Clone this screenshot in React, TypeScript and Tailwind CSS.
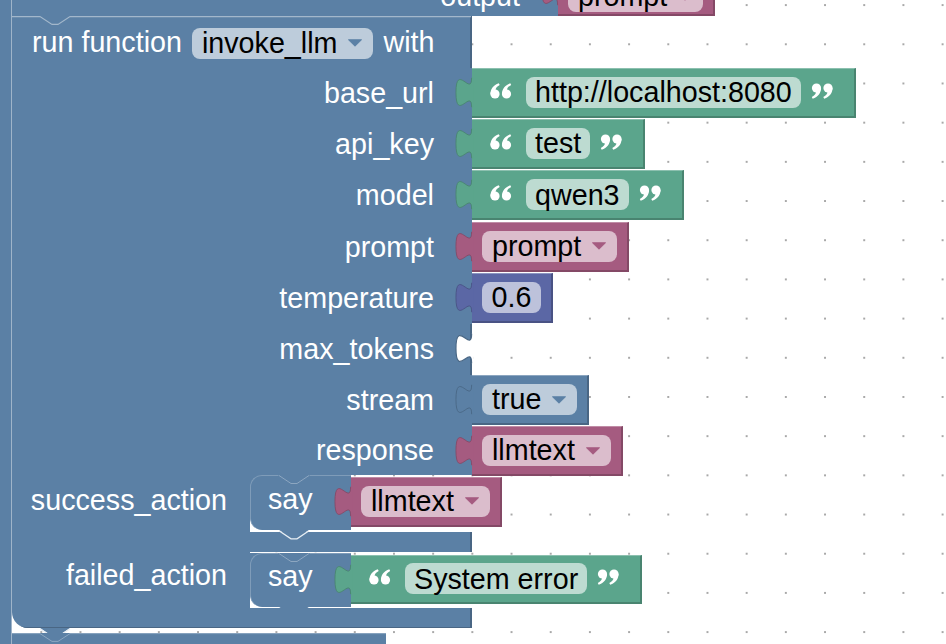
import React from 'react';

type V = 'green' | 'mag' | 'blue' | 'num';

const VARS: Record<V, { block: string; pill: string; fill: string; dark: string }> = {
  green: {
    block: 'bg-[#5ba58c] border-t-[#8cc0af] border-r-[#498470] border-b-[#498470]',
    pill: 'bg-[#bddbd1]',
    fill: '#5ba58c',
    dark: '#498470',
  },
  mag: {
    block: 'bg-[#a55b80] border-t-[#c08ca6] border-r-[#844966] border-b-[#844966]',
    pill: 'bg-[#dbbdcc]',
    fill: '#a55b80',
    dark: '#844966',
  },
  blue: {
    block: 'bg-[#5b80a5] border-t-[#8ca6c0] border-r-[#496684] border-b-[#496684]',
    pill: 'bg-[#bdccdb]',
    fill: '#5b80a5',
    dark: '#496684',
  },
  num: {
    block: 'bg-[#5b67a5] border-t-[#8c95c0] border-r-[#495284] border-b-[#495284]',
    pill: 'bg-[#bdc2db]',
    fill: '#5b67a5',
    dark: '#495284',
  },
};

function Tab({ fill, stroke }: { fill: string; stroke: string }) {
  return (
    <svg
      className="absolute left-[-17.64px] top-[-1px]"
      width="19.6"
      height="49"
      viewBox="-9 0 10 25"
      aria-hidden="true"
    >
      <path d="M1,5 L0,5 c0,10 -8,-8 -8,7.5 s8,-2.5 8,7.5 L1,20 Z" fill={fill} />
      <path d="M0,5 c0,10 -8,-8 -8,7.5 s8,-2.5 8,7.5" fill="none" stroke={stroke} strokeWidth="0.45" />
    </svg>
  );
}

function Arrow({ color }: { color: string }) {
  return (
    <svg width="16" height="8" viewBox="0 0 16 8" aria-hidden="true">
      <path d="M1.5,0.8 L14.5,0.8 L8,7.2 Z" fill={color} stroke={color} strokeWidth="1" strokeLinejoin="round" />
    </svg>
  );
}

function Pill({ v, text, dropdown }: { v: V; text: string; dropdown?: boolean }) {
  return (
    <div
      className={`h-[31px] shrink-0 rounded-[8px] flex items-center ${VARS[v].pill} ${
        dropdown ? 'pl-[10px] pr-[10px] gap-[10px]' : 'px-[9px]'
      }`}
    >
      <span className="text-black leading-none whitespace-nowrap">{text}</span>
      {dropdown && <Arrow color={VARS[v].fill} />}
    </div>
  );
}

function QuoteMark() {
  return (
    <>
      <circle cx="5" cy="11" r="4.6" />
      <path d="M0.5,11.6 C0.2,6.2 3.4,2.2 8.8,0.3 L9.7,1.9 C6.8,3.4 5.4,5.4 5.6,7.2 Z" />
    </>
  );
}

function Quote({ close, className = '' }: { close?: boolean; className?: string }) {
  return (
    <svg
      className={`relative top-[-2px] shrink-0 ${className}`}
      width="22"
      height="16"
      viewBox="0 0 22 16"
      fill="#ffffff"
      aria-hidden="true"
    >
      <g transform={close ? 'rotate(180 11 8)' : undefined}>
        <QuoteMark />
        <g transform="translate(11.5 0)">
          <QuoteMark />
        </g>
      </g>
    </svg>
  );
}

function ValueBlock({
  v,
  children,
  className = '',
  hClass = 'h-[50px]',
}: {
  v: V;
  children: React.ReactNode;
  className?: string;
  hClass?: string;
}) {
  return (
    <div className={`relative shrink-0 flex items-center border-t border-r-2 border-b-2 ${hClass} ${VARS[v].block} ${className}`}>
      <Tab fill={VARS[v].fill} stroke={VARS[v].dark} />
      {children}
    </div>
  );
}

function TextBlock({ text, hClass, className = '' }: { text: string; hClass?: string; className?: string }) {
  return (
    <ValueBlock v="green" hClass={hClass} className={`pl-[18px] pr-[21px] ${className}`}>
      <Quote />
      <div className="ml-[14px]">
        <Pill v="green" text={text} />
      </div>
      <Quote close className="ml-[10px]" />
    </ValueBlock>
  );
}

function VarBlock({ v, text, className = '' }: { v: V; text: string; className?: string }) {
  return (
    <ValueBlock v={v} className={`pl-[10px] pr-[10px] ${className}`}>
      <Pill v={v} text={text} dropdown />
    </ValueBlock>
  );
}

function NumBlock({ text }: { text: string }) {
  return (
    <ValueBlock v="num" className="pl-[10px] pr-[10px]">
      <div className="h-[31px] rounded-[8px] flex items-center px-[9.5px] bg-[#bdc2db]">
        <span className="text-black leading-none">{text}</span>
      </div>
    </ValueBlock>
  );
}

function InputRow({
  label,
  children,
  empty,
  hClass = 'h-[51.2px]',
}: {
  label: string;
  children?: React.ReactNode;
  empty?: boolean;
  hClass?: string;
}) {
  return (
    <div className={`flex items-start ${hClass}`}>
      <div
        className={`relative w-[460px] h-full shrink-0 bg-[#5b80a5] flex items-center justify-end pr-[38px] text-white ${
          empty ? 'shadow-[inset_-2px_0_0_#496684]' : ''
        }`}
      >
        <span className="whitespace-nowrap">{label}</span>
        {empty && (
          <svg
            className="absolute right-[-1.96px] top-0"
            width="19.6"
            height="49"
            viewBox="-9 0 10 25"
            aria-hidden="true"
          >
            <path d="M1,5 L0,5 c0,10 -8,-8 -8,7.5 s8,-2.5 8,7.5 L1,20 Z" fill="#ffffff" />
            <path d="M0,5 c0,10 -8,-8 -8,7.5 s8,-2.5 8,7.5" fill="none" stroke="#496684" strokeWidth="0.6" />
          </svg>
        )}
      </div>
      {children}
    </div>
  );
}

function BottomTab({ className }: { className: string }) {
  return (
    <svg className={className} width="31" height="10" viewBox="0 0 31 10" aria-hidden="true">
      <path d="M0,0 L12,8 L18,8 L30,0 Z" fill="#5b80a5" />
      <path d="M0,0.8 L12,8.8 L18,8.8 L30,0.8" stroke="#e8eef4" strokeWidth="1.3" fill="none" />
    </svg>
  );
}

function Say({ hClass, mtClass }: { hClass: string; mtClass: string }) {
  return (
    <div
      className={`relative shrink-0 w-[101px] ${hClass} ${mtClass} bg-[linear-gradient(to_bottom,#5b80a5_50%,transparent_50%)]`}
    >
      <div className="h-full w-full bg-[#5b80a5] rounded-l-[12px] border-l border-t border-[#7f9cb9] flex items-center pl-[17px] pb-[7px] text-white">
        say
      </div>
      <svg className="absolute left-0 top-0" width="101" height="10" viewBox="0 0 101 10" aria-hidden="true">
        <rect x="28.5" y="0" width="31" height="2" fill="#5b80a5" />
        <path d="M29,0.5 L41,8.5 L47,8.5 L59,0.5" stroke="#8ca6c0" strokeWidth="1" fill="none" />
      </svg>
      <BottomTab className="absolute left-[29px] top-full" />
    </div>
  );
}

export default function App() {
  return (
    <div className="relative w-[946px] h-[644px] overflow-hidden bg-white bg-[radial-gradient(circle,#a8a8a8_1px,transparent_1.5px)] bg-size-[39.2px_39.2px] bg-position-[-17.5px_-14.5px] flex text-[28.7px] font-['Liberation_Sans',Arial,sans-serif]">
      {/* outer C-block arm */}
      <div className="w-[12px] h-full shrink-0 bg-[#5b80a5] border-r border-[#9fb4c9]" />

      <div className="flex flex-col items-start">
        {/* previous block (partially visible) */}
        <div className="flex items-start h-[50px] mt-[-34px]">
          <div className="w-[546px] h-full shrink-0 bg-[#5b80a5] flex items-center justify-end pr-[38px] pt-[12px] text-white">
            output
          </div>
          <VarBlock v="mag" text="prompt" className="pt-[12px]" />
        </div>

        {/* run function block */}
        <div className="relative flex flex-col">
          <div className="h-[52px] w-[460px] bg-[#5b80a5] shadow-[inset_-2px_0_0_#496684] flex items-center pl-[20px] pt-[2px] text-white">
            <span className="whitespace-nowrap">run function</span>
            <div className="ml-[10px]">
              <Pill v="blue" text="invoke_llm" dropdown />
            </div>
            <span className="ml-[10px]">with</span>
          </div>

          <InputRow label="base_url">
            <TextBlock text="http://localhost:8080" />
          </InputRow>
          <InputRow label="api_key">
            <TextBlock text="test" />
          </InputRow>
          <InputRow label="model">
            <TextBlock text="qwen3" />
          </InputRow>
          <InputRow label="prompt">
            <VarBlock v="mag" text="prompt" />
          </InputRow>
          <InputRow label="temperature">
            <NumBlock text="0.6" />
          </InputRow>
          <InputRow label="max_tokens" empty />
          <InputRow label="stream">
            <VarBlock v="blue" text="true" />
          </InputRow>
          <InputRow label="response" hClass="h-[48.6px]">
            <VarBlock v="mag" text="llmtext" />
          </InputRow>

          {/* success_action statement input */}
          <div className="flex items-start h-[57px]">
            <div className="w-[238px] h-full shrink-0 bg-[#5b80a5] flex items-center justify-end pr-[23px] pb-[5px] text-white">
              success_action
            </div>
            <Say hClass="h-[55px]" mtClass="mt-0" />
            <VarBlock v="mag" text="llmtext" className="mt-[2px]" />
          </div>

          {/* middle arm */}
          <div className="h-[20px] w-[460px] bg-[#5b80a5] shadow-[inset_-2px_0_0_#496684]" />

          {/* failed_action statement input */}
          <div className="flex items-start h-[56px]">
            <div className="w-[238px] h-full shrink-0 bg-[#5b80a5] flex items-center justify-end pr-[23px] pb-[9px] text-white">
              failed_action
            </div>
            <Say hClass="h-[54px]" mtClass="mt-[1px]" />
            <TextBlock text="System error" hClass="h-[49px]" className="mt-[3px]" />
          </div>

          {/* bottom arm */}
          <div className="relative h-[20px] w-[460px] bg-[#5b80a5] rounded-bl-[16px] shadow-[inset_-2px_-1px_0_#496684]">
            <BottomTab className="absolute left-[28px] top-full" />
          </div>

          {/* top outline with notch */}
          <svg className="absolute left-0 top-0" width="460" height="10" viewBox="0 0 460 10" aria-hidden="true">
            <path d="M0,0.6 L28,0.6 L40,8.4 L46,8.4 L58,0.6 L459,0.6" stroke="#a3b7cb" strokeWidth="1.2" fill="none" />
          </svg>
        </div>

        {/* next block (partially visible) */}
        <div className="relative mt-[5px] h-[30px] w-[374px] bg-[#5b80a5]">
          <svg className="absolute left-0 top-0" width="374" height="10" viewBox="0 0 374 10" aria-hidden="true">
            <path d="M0,0.6 L28,0.6 L40,8.4 L46,8.4 L58,0.6 L374,0.6" stroke="#8ca6c0" strokeWidth="1" fill="none" />
          </svg>
        </div>
      </div>
    </div>
  );
}
